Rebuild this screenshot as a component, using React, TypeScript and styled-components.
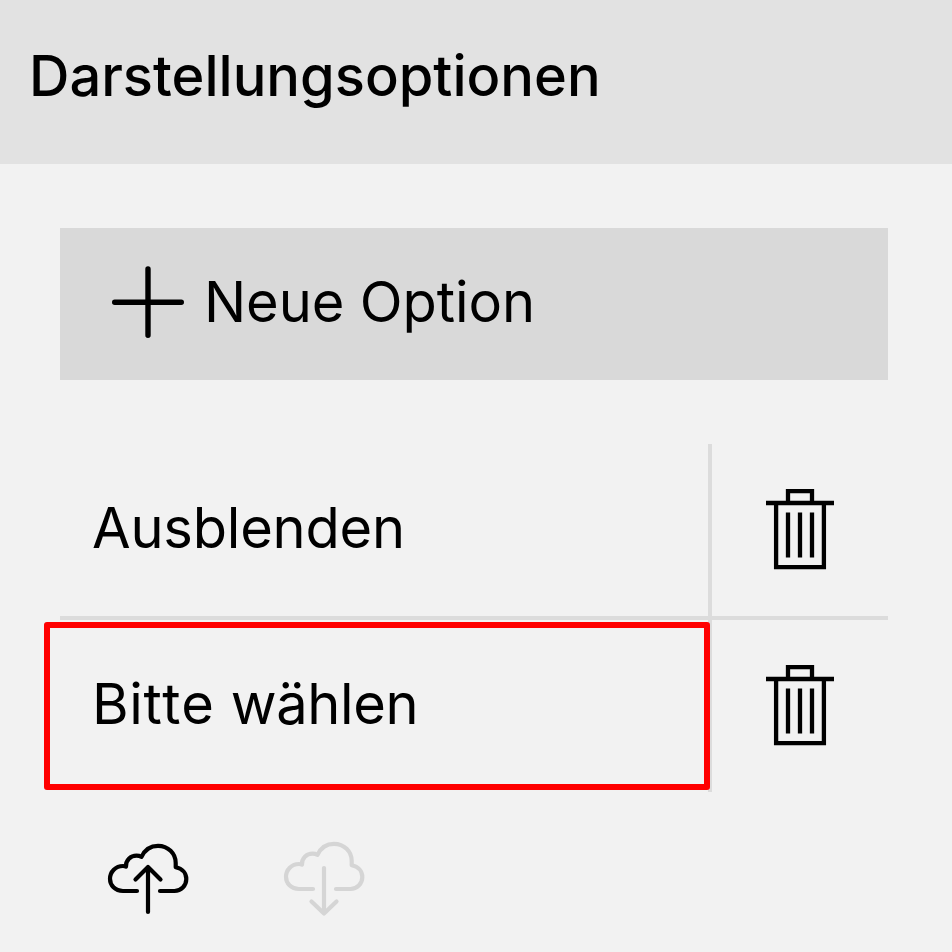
import React from 'react';
import styled, { createGlobalStyle } from 'styled-components';

const GlobalStyle = createGlobalStyle`
  * { box-sizing: border-box; }
  body {
    margin: 0;
    background: #f2f2f2;
    color: #000;
    font-family: Inter, sans-serif;
  }
`;

const Panel = styled.main`
  width: 952px;
  height: 952px;
  overflow: hidden;
  background: #f2f2f2;
`;

const Header = styled.header`
  height: 164px;
  padding: 42px 0 0 29px;
  background: #e2e2e2;
`;

const Title = styled.h1`
  margin: 0;
  font-size: 56px;
  line-height: 68px;
  font-weight: 500;
  white-space: nowrap;
`;

const Content = styled.section`
  padding: 64px 64px 0 60px;
`;

const AddButton = styled.button`
  display: flex;
  align-items: center;
  gap: 20px;
  width: 100%;
  height: 152px;
  padding: 0 0 4px 52px;
  border: 0;
  background: #d9d9d9;
  color: #000;
  font: 400 56px/68px Inter, sans-serif;
  letter-spacing: -0.1px;
`;

const OptionList = styled.div`
  margin-top: 64px;
`;

const OptionRow = styled.div<{ $divided?: boolean }>`
  display: grid;
  grid-template-columns: 652px 1fr;
  height: ${({ $divided }) => ($divided ? '176px' : '172px')};
  border-bottom: ${({ $divided }) => ($divided ? '4px solid #dcdcdc' : '0')};
`;

const OptionName = styled.div`
  position: relative;
  padding: 50px 0 0 32px;
  border-right: 4px solid #dcdcdc;
  font-size: 56px;
  line-height: 68px;
  letter-spacing: -0.2px;
  font-kerning: none;
`;

const Word = styled.span<{ $tracking: number }>`
  letter-spacing: ${({ $tracking }) => $tracking}px;
`;

const Highlight = styled.span`
  position: absolute;
  inset: 2px -2px 2px -16px;
  border: 6px solid #ff0000;
  border-radius: 3px;
`;

const IconButton = styled.button`
  display: flex;
  padding: 42px 0 0 52px;
  border: 0;
  background: none;
  color: #000;
`;

const TransferBar = styled.div`
  display: flex;
  gap: 92px;
  padding: 46px 0 0 46px;
`;

const Icon = styled.svg<{ $muted?: boolean; $weight?: number; $square?: boolean }>`
  display: block;
  flex: none;
  fill: none;
  stroke: ${({ $muted }) => ($muted ? '#d5d5d5' : '#000')};
  stroke-width: ${({ $weight = 4 }) => $weight};
  stroke-linecap: ${({ $square }) => ($square ? 'butt' : 'round')};
  stroke-linejoin: ${({ $square }) => ($square ? 'miter' : 'round')};
`;

const TrashIcon = () => (
  <Icon $square $weight={4.3} width="72" height="86" viewBox="0 0 72 86">
    <path d="M2 17H70M24 17V5.2H48V17M12.1 17V81.1H59.9V17M24 26.5V71.5M36 26.5V71.5M48 26.5V71.5" />
  </Icon>
);

const CLOUD = 'M31 53H17C9 53 4 47.3 4 40.8C4 33.5 9.7 28 17 28C18.2 28 19.2 28.2 20 28.6C19.6 22 24.6 17.7 30.5 17.7C32.4 17.7 34 18.1 35.5 18.8C38.7 12 44.6 7.8 52 7.8C62 7.8 69.7 15.5 69.7 25V29.2C76.6 30.6 80.3 35.6 80.3 41C80.3 47.7 75 53 68.5 53H54';

const CloudIcon = ({ down = false }: { down?: boolean }) => (
  <Icon $muted={down} $weight={4.2} width="84" height="80" viewBox="0 0 84 80">
    <path transform={down ? 'translate(0 -2)' : undefined} d={CLOUD} />
    <path d={down ? 'M42 30V75.5M29.5 63.5L42 75.5L54.5 63.5' : 'M42 74V29M29.5 41.5L42 29L54.5 41.5'} />
  </Icon>
);

export default function App() {
  return (
    <>
      <GlobalStyle />
      <Panel>
        <Header><Title>Darstellungsoptionen</Title></Header>
        <Content>
          <AddButton>
            <Icon $weight={5.4} width="72" height="72" viewBox="0 0 72 72"><path d="M2.7 36.2H69.3M36 3V69.3" /></Icon>
            Neue Option
          </AddButton>
          <OptionList>
            <OptionRow $divided>
              <OptionName>Ausblenden</OptionName>
              <IconButton aria-label="Ausblenden löschen"><TrashIcon /></IconButton>
            </OptionRow>
            <OptionRow>
              <OptionName><Word $tracking={0.6}>Bitte </Word><Word $tracking={-0.4}>wählen</Word><Highlight /></OptionName>
              <IconButton aria-label="Auswahl löschen"><TrashIcon /></IconButton>
            </OptionRow>
          </OptionList>
          <TransferBar><CloudIcon /><CloudIcon down /></TransferBar>
        </Content>
      </Panel>
    </>
  );
}
